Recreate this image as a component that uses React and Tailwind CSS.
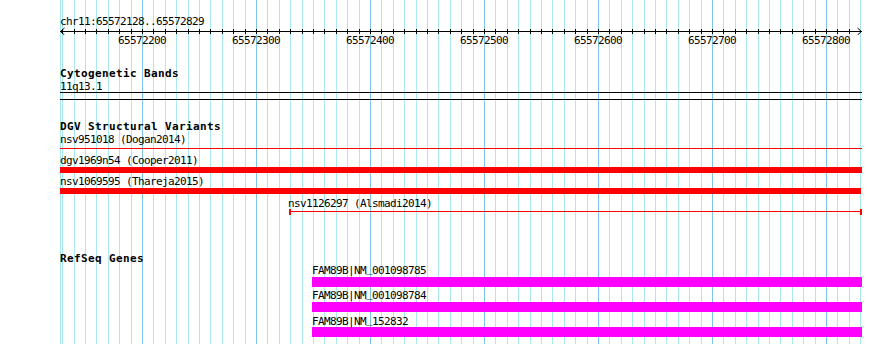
import React from 'react';

const START = 65572128;
const PX_PER_BP = 1.14;
const toX = (bp) => 60 + (bp - START) * PX_PER_BP;

const gridStops = [];
for (let bp = 65572130; bp <= 65572830; bp += 10) gridStops.push(bp);
const majors = gridStops.filter((bp) => bp % 100 === 0 && bp < 65572829);

const font = "font-['DejaVu_Sans_Mono',monospace] text-[11px] leading-[11px] tracking-[-0.62px] text-black whitespace-nowrap";
const mono = `relative z-10 ${font}`;
const title = "font-['DejaVu_Sans_Mono',monospace] text-[11px] leading-[11px] tracking-[0.38px] font-bold text-black whitespace-nowrap";

const Grid = () => (
  <svg className="absolute inset-0" width="890" height="344">
    <line x1="60.5" y1="0" x2="60.5" y2="344" stroke="#a8e8ee" />
    {gridStops.map((bp) => {
      const x = Math.round(toX(bp)) + 0.5;
      const major = bp % 100 === 0;
      return (
        <line key={bp} x1={x} y1="0" x2={x} y2="344" stroke={major ? '#7ec6ec' : '#a8e8ee'} />
      );
    })}
  </svg>
);

const Ruler = () => (
  <svg width="890" height="8" className="block">
    <line x1="60" y1="4.5" x2="862" y2="4.5" stroke="black" />
    <path d="M64.5 1 L60.5 4.5 L64.5 8" fill="none" stroke="black" />
    <path d="M857.5 1 L861.5 4.5 L857.5 8" fill="none" stroke="black" />
    {gridStops.filter((bp) => bp < 65572829).map((bp) => {
      const x = Math.round(toX(bp)) + 0.5;
      return <line key={bp} x1={x} y1="2" x2={x} y2="7" stroke="black" />;
    })}
  </svg>
);

// gene label, underscore lifted to the baseline like the bitmap font
const GeneLabel = ({ gene, acc, className }) => (
  <div className={`${mono} ${className}`}>
    {gene}|NM<span className="relative -top-[2px]">_</span>{acc}
  </div>
);

const App = () => {
  return (
    <div className="relative w-[890px] h-[344px] bg-white overflow-hidden">
      <Grid />

      <div className="relative">
        <div className={`${mono} ml-[60px] pt-[16px]`}>chr11:65572128..65572829</div>
        <Ruler />
        <div className="relative h-[11px]">
          {majors.map((bp) => (
            <span
              key={bp}
              className={`${font} absolute top-0 -translate-x-1/2`}
              style={{ left: Math.round(toX(bp)) }}
            >
              {bp}
            </span>
          ))}
        </div>

        {/* Cytogenetic Bands */}
        <div className={`${title} ml-[60px] mt-[22px]`}>Cytogenetic Bands</div>
        <div className={`${mono} ml-[60px] mt-[2px]`}>11q13.1</div>
        <div className="ml-[60px] w-[802px] h-[8px] border-y border-black" />

        {/* DGV Structural Variants */}
        <div className={`${title} ml-[60px] mt-[21px]`}>DGV Structural Variants</div>
        <div className={`${mono} ml-[60px] mt-[2px]`}>nsv951018 (Dogan2014)</div>
        <div className="ml-[60px] mt-[3px] w-[802px] h-[1px] bg-[#ff0000]" />
        <div className={`${mono} ml-[60px] mt-[6px]`}>dgv1969n54 (Cooper2011)</div>
        <div className="ml-[60px] mt-[1px] w-[802px] h-[6px] bg-[#ff0000]" />
        <div className={`${mono} ml-[60px] mt-[3px]`}>nsv1069595 (Thareja2015)</div>
        <div className="ml-[60px] mt-[1px] w-[801px] h-[6px] bg-[#ff0000]" />
        <div className={`${mono} ml-[288px] mt-[4px]`}>nsv1126297 (Alsmadi2014)</div>
        <div className="ml-[289px] w-[573px] h-[6px] pt-[2px] border-x-2 border-[#ff0000]">
          <div className="h-[1px] bg-[#ff0000]" />
        </div>

        {/* RefSeq Genes */}
        <div className={`${title} ml-[60px] mt-[38px]`}>RefSeq Genes</div>
        <GeneLabel gene="FAM89B" acc="001098785" className="ml-[312px] mt-[1px]" />
        <div className="ml-[312px] mt-[1px] w-[550px] h-[10px] bg-[#ff00ff]" />
        <GeneLabel gene="FAM89B" acc="001098784" className="ml-[312px] mt-[3px]" />
        <div className="ml-[312px] mt-[1px] w-[550px] h-[10px] bg-[#ff00ff]" />
        <GeneLabel gene="FAM89B" acc="152832" className="ml-[312px] mt-[4px]" />
        <div className="ml-[312px] w-[550px] h-[10px] bg-[#ff00ff]" />
      </div>
    </div>
  );
};

export default App;
